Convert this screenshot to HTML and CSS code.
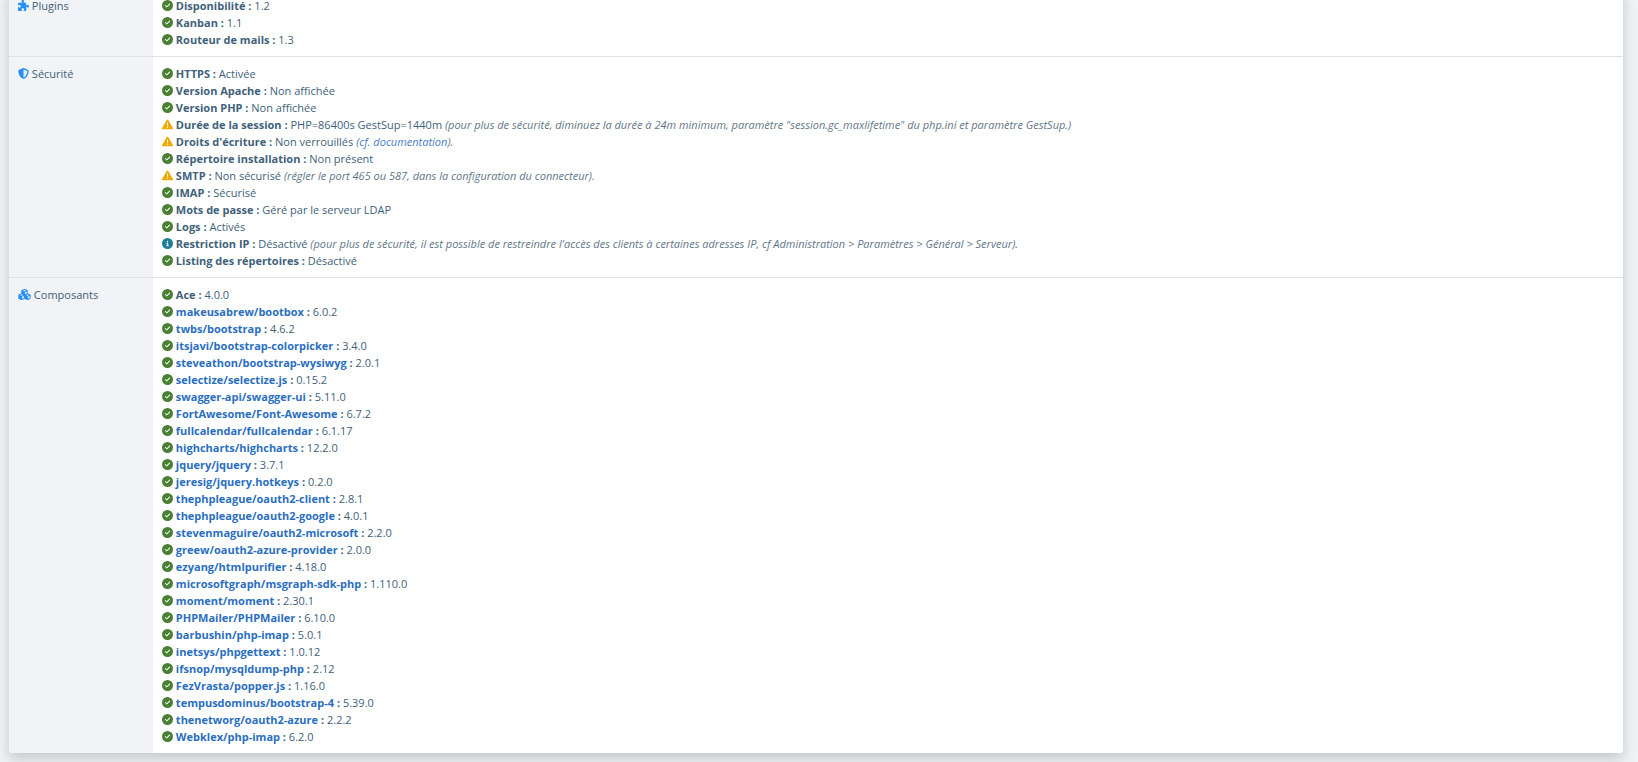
FILE: index.html
```html
<!DOCTYPE html>
<html lang="fr">
<head>
<meta charset="utf-8">
<title>État du système</title>
<link rel="stylesheet" href="styles.css">
</head>
<body>
<svg class="sprite" aria-hidden="true">
  <symbol id="ok" viewBox="0 0 512 512"><path d="M256 512A256 256 0 1 0 256 0a256 256 0 1 0 0 512zM369 209L241 337c-9.400 9.400-24.600 9.400-33.900 0l-64-64c-9.400-9.400-9.400-24.600 0-33.900s24.600-9.400 33.900 0l47 47L335 175c9.400-9.400 24.600-9.400 33.900 0s9.400 24.600 0 33.900z"/></symbol>
  <symbol id="info" viewBox="0 0 512 512"><path d="M256 512A256 256 0 1 0 256 0a256 256 0 1 0 0 512zM216 336h24V272H216c-13.300 0-24-10.700-24-24s10.700-24 24-24h48c13.300 0 24 10.700 24 24v88h8c13.300 0 24 10.700 24 24s-10.700 24-24 24H216c-13.300 0-24-10.700-24-24s10.700-24 24-24zm40-208a32 32 0 1 1 0 64 32 32 0 1 1 0-64z"/></symbol>
  <symbol id="warn" viewBox="0 0 512 512"><path d="M256 32c14.200 0 27.300 7.500 34.500 19.800l216 368c7.300 12.400 7.300 27.700 .2 40.100S486.300 480 472 480H40c-14.300 0-27.600-7.700-34.700-20.100s-7-27.800 .2-40.100l216-368C228.700 39.500 241.800 32 256 32zm0 128c-13.300 0-24 10.700-24 24V296c0 13.300 10.700 24 24 24s24-10.700 24-24V184c0-13.300-10.700-24-24-24zm32 224a32 32 0 1 0 -64 0 32 32 0 1 0 64 0z"/></symbol>
  <symbol id="shield" viewBox="0 0 512 512"><path d="M256 0c4.600 0 9.200 1 13.400 2.900L457.700 82.800c22 9.300 38.400 31 38.300 57.200c-.5 99.200-41.300 280.700-213.600 363.200c-16.700 8-36.100 8-52.800 0C57.300 420.700 16.500 239.200 16 140c-.1-26.200 16.300-47.900 38.300-57.200L242.700 2.900C246.800 1 251.400 0 256 0zm0 66.800V444.800C394 378 431.100 230.100 432 141.400L256 66.800z"/></symbol>
  <symbol id="puzzle" viewBox="0 0 512 512"><path d="M192 104.800c0-9.200-5.800-17.300-13.200-22.800C167.200 73.300 160 61.300 160 48c0-26.500 28.700-48 64-48s64 21.500 64 48c0 13.300-7.200 25.300-18.800 34c-7.400 5.500-13.200 13.600-13.200 22.800c0 12.800 10.400 23.200 23.200 23.200H336c26.500 0 48 21.500 48 48v56.800c0 12.800 10.400 23.200 23.200 23.200c9.200 0 17.300-5.800 22.800-13.200c8.700-11.600 20.700-18.800 34-18.800c26.500 0 48 28.700 48 64s-21.500 64-48 64c-13.300 0-25.300-7.200-34-18.800c-5.500-7.400-13.600-13.200-22.800-13.200c-12.800 0-23.200 10.400-23.200 23.200V464c0 26.500-21.500 48-48 48H279.200c-12.800 0-23.200-10.400-23.200-23.200c0-9.200 5.800-17.300 13.200-22.800c11.600-8.700 18.800-20.700 18.800-34c0-26.500-28.700-48-64-48s-64 21.500-64 48c0 13.300 7.200 25.300 18.800 34c7.400 5.500 13.200 13.600 13.200 22.800c0 12.800-10.400 23.200-23.200 23.200H48c-26.500 0-48-21.500-48-48V343.200C0 330.400 10.400 320 23.200 320c9.200 0 17.300 5.800 22.800 13.200C54.700 344.800 66.700 352 80 352c26.500 0 48-28.700 48-64s-21.500-64-48-64c-13.300 0-25.300 7.200-34 18.800C40.500 250.200 32.400 256 23.200 256C10.400 256 0 245.600 0 232.800V176c0-26.500 21.500-48 48-48H168.800c12.800 0 23.200-10.400 23.200-23.200z"/></symbol>
  <symbol id="cubes" viewBox="0 0 576 512"><path fill-rule="evenodd" d="M290.800 48.600l78.400 29.700L288 109.500 206.800 78.300l78.400-29.700c1.800-.7 3.800-.7 5.700 0zM136 92.500V204.700c-1.300 .4-2.600 .8-3.900 1.300l-96 36.400C14.400 250.600 0 271.500 0 294.700V413.900c0 22.200 13.100 42.300 33.500 51.300l96 42.200c14.400 6.300 30.700 6.300 45.100 0L288 457.500l113.500 49.900c14.400 6.300 30.700 6.300 45.100 0l96-42.200c20.300-8.900 33.500-29.100 33.500-51.300V294.700c0-23.300-14.400-44.100-36.100-52.400l-96-36.400c-1.300-.5-2.600-.9-3.900-1.300V92.500c0-23.300-14.400-44.100-36.100-52.400l-96-36.400c-12.800-4.800-26.900-4.800-39.700 0l-96 36.400C150.400 48.400 136 69.300 136 92.500zM392 210.600l-82.400 31.200V152.600L392 121v89.600zM154.800 250.900l78.400 29.700L152 311.700 70.800 280.600l78.400-29.700c1.800-.7 3.800-.7 5.700 0zm18.800 204.400V354.800L256 323.200v95.900l-82.400 36.200zM421.200 250.900c1.800-.7 3.800-.7 5.700 0l78.400 29.700L424 311.700l-81.200-31.100 78.400-29.700zM523.200 421.200l-77.600 34.100V354.800L528 323.200v90.700c0 3.200-1.900 6-4.800 7.300z"/></symbol>
</svg>
<main class="card">
<table class="status">
<tr>
<th scope="row"><svg class="icon"><use href="#puzzle"/></svg> Plugins</th>
<td><ul>
<li><svg class="icon ok"><use href="#ok"/></svg> <b>Disponibilité :</b> 1.2</li>
<li><svg class="icon ok"><use href="#ok"/></svg> <b>Kanban :</b> 1.1</li>
<li><svg class="icon ok"><use href="#ok"/></svg> <b>Routeur de mails :</b> 1.3</li>
</ul></td>
</tr>
<tr>
<th scope="row"><svg class="icon"><use href="#shield"/></svg> Sécurité</th>
<td><ul>
<li><svg class="icon ok"><use href="#ok"/></svg> <b>HTTPS :</b> Activée</li>
<li><svg class="icon ok"><use href="#ok"/></svg> <b>Version Apache :</b> Non affichée</li>
<li><svg class="icon ok"><use href="#ok"/></svg> <b>Version PHP :</b> Non affichée</li>
<li><svg class="icon warn"><use href="#warn"/></svg> <b>Durée de la session :</b> PHP=86400s GestSup=1440m <i>(pour plus de sécurité, diminuez la durée à 24m minimum, paramètre "session.gc_maxlifetime" du php.ini et paramètre GestSup.)</i></li>
<li><svg class="icon warn"><use href="#warn"/></svg> <b>Droits d'écriture :</b> Non verrouillés <i>(<a href="#">cf. documentation</a>).</i></li>
<li><svg class="icon ok"><use href="#ok"/></svg> <b>Répertoire installation :</b> Non présent</li>
<li><svg class="icon warn"><use href="#warn"/></svg> <b>SMTP :</b> Non sécurisé <i>(régler le port 465 ou 587, dans la configuration du connecteur).</i></li>
<li><svg class="icon ok"><use href="#ok"/></svg> <b>IMAP :</b> Sécurisé</li>
<li><svg class="icon ok"><use href="#ok"/></svg> <b>Mots de passe :</b> Géré par le serveur LDAP</li>
<li><svg class="icon ok"><use href="#ok"/></svg> <b>Logs :</b> Activés</li>
<li><svg class="icon info"><use href="#info"/></svg> <b>Restriction IP :</b> Désactivé <i>(pour plus de sécurité, il est possible de restreindre l'accès des clients à certaines adresses IP, cf Administration &gt; Paramètres &gt; Général &gt; Serveur).</i></li>
<li><svg class="icon ok"><use href="#ok"/></svg> <b>Listing des répertoires :</b> Désactivé</li>
</ul></td>
</tr>
<tr>
<th scope="row"><svg class="icon wide"><use href="#cubes"/></svg> Composants</th>
<td><ul>
<li><svg class="icon ok"><use href="#ok"/></svg> <b>Ace :</b> 4.0.0</li>
<li><svg class="icon ok"><use href="#ok"/></svg> <b><a href="#">makeusabrew/bootbox</a> :</b> 6.0.2</li>
<li><svg class="icon ok"><use href="#ok"/></svg> <b><a href="#">twbs/bootstrap</a> :</b> 4.6.2</li>
<li><svg class="icon ok"><use href="#ok"/></svg> <b><a href="#">itsjavi/bootstrap-colorpicker</a> :</b> 3.4.0</li>
<li><svg class="icon ok"><use href="#ok"/></svg> <b><a href="#">steveathon/bootstrap-wysiwyg</a> :</b> 2.0.1</li>
<li><svg class="icon ok"><use href="#ok"/></svg> <b><a href="#">selectize/selectize.js</a> :</b> 0.15.2</li>
<li><svg class="icon ok"><use href="#ok"/></svg> <b><a href="#">swagger-api/swagger-ui</a> :</b> 5.11.0</li>
<li><svg class="icon ok"><use href="#ok"/></svg> <b><a href="#">FortAwesome/Font-Awesome</a> :</b> 6.7.2</li>
<li><svg class="icon ok"><use href="#ok"/></svg> <b><a href="#">fullcalendar/fullcalendar</a> :</b> 6.1.17</li>
<li><svg class="icon ok"><use href="#ok"/></svg> <b><a href="#">highcharts/highcharts</a> :</b> 12.2.0</li>
<li><svg class="icon ok"><use href="#ok"/></svg> <b><a href="#">jquery/jquery</a> :</b> 3.7.1</li>
<li><svg class="icon ok"><use href="#ok"/></svg> <b><a href="#">jeresig/jquery.hotkeys</a> :</b> 0.2.0</li>
<li><svg class="icon ok"><use href="#ok"/></svg> <b><a href="#">thephpleague/oauth2-client</a> :</b> 2.8.1</li>
<li><svg class="icon ok"><use href="#ok"/></svg> <b><a href="#">thephpleague/oauth2-google</a> :</b> 4.0.1</li>
<li><svg class="icon ok"><use href="#ok"/></svg> <b><a href="#">stevenmaguire/oauth2-microsoft</a> :</b> 2.2.0</li>
<li><svg class="icon ok"><use href="#ok"/></svg> <b><a href="#">greew/oauth2-azure-provider</a> :</b> 2.0.0</li>
<li><svg class="icon ok"><use href="#ok"/></svg> <b><a href="#">ezyang/htmlpurifier</a> :</b> 4.18.0</li>
<li><svg class="icon ok"><use href="#ok"/></svg> <b><a href="#">microsoftgraph/msgraph-sdk-php</a> :</b> 1.110.0</li>
<li><svg class="icon ok"><use href="#ok"/></svg> <b><a href="#">moment/moment</a> :</b> 2.30.1</li>
<li><svg class="icon ok"><use href="#ok"/></svg> <b><a href="#">PHPMailer/PHPMailer</a> :</b> 6.10.0</li>
<li><svg class="icon ok"><use href="#ok"/></svg> <b><a href="#">barbushin/php-imap</a> :</b> 5.0.1</li>
<li><svg class="icon ok"><use href="#ok"/></svg> <b><a href="#">inetsys/phpgettext</a> :</b> 1.0.12</li>
<li><svg class="icon ok"><use href="#ok"/></svg> <b><a href="#">ifsnop/mysqldump-php</a> :</b> 2.12</li>
<li><svg class="icon ok"><use href="#ok"/></svg> <b><a href="#">FezVrasta/popper.js</a> :</b> 1.16.0</li>
<li><svg class="icon ok"><use href="#ok"/></svg> <b><a href="#">tempusdominus/bootstrap-4</a> :</b> 5.39.0</li>
<li><svg class="icon ok"><use href="#ok"/></svg> <b><a href="#">thenetworg/oauth2-azure</a> :</b> 2.2.2</li>
<li><svg class="icon ok"><use href="#ok"/></svg> <b><a href="#">Webklex/php-imap</a> :</b> 6.2.0</li>
</ul></td>
</tr>
</table>
</main>
</body>
</html>
```

FILE: styles.css
```css
* { box-sizing: border-box; }
html { overflow: hidden; }
body {
  margin: 0;
  padding: 0 15px 9px 9px;
  background: #eff3f6;
  color: #41617a;
  font: 11px/17px "Open Sans", "Noto Sans", sans-serif;
}
.sprite { position: absolute; width: 0; height: 0; }
.card {
  margin-top: -11px;
  background: #fff;
  border-radius: 3px;
  box-shadow: 0 6px 14px rgba(0, 0, 0, 0.18);
  overflow: hidden;
}
.status { width: 100%; border-collapse: collapse; }
.status th, .status td {
  padding: 8px 9px;
  text-align: left;
  vertical-align: top;
  font-weight: 400;
}
.status th { width: 144px; background: #f2f3f6; }
.status tr + tr { border-top: 1px solid #dee2e6; }
ul { margin: 0; padding: 0; list-style: none; }
b { font-weight: 700; }
i { color: #5f7689; }
a { color: #2a6ebf; text-decoration: none; }
i a { color: #4a7ec8; }
.icon {
  width: 11px;
  height: 11px;
  vertical-align: -1px;
  fill: #2790f5;
}
.icon.wide { width: 13px; }
.icon.ok { fill: #4a8034; }
.icon.warn { fill: #eeaa00; }
.icon.info { fill: #1f7d97; }
```
